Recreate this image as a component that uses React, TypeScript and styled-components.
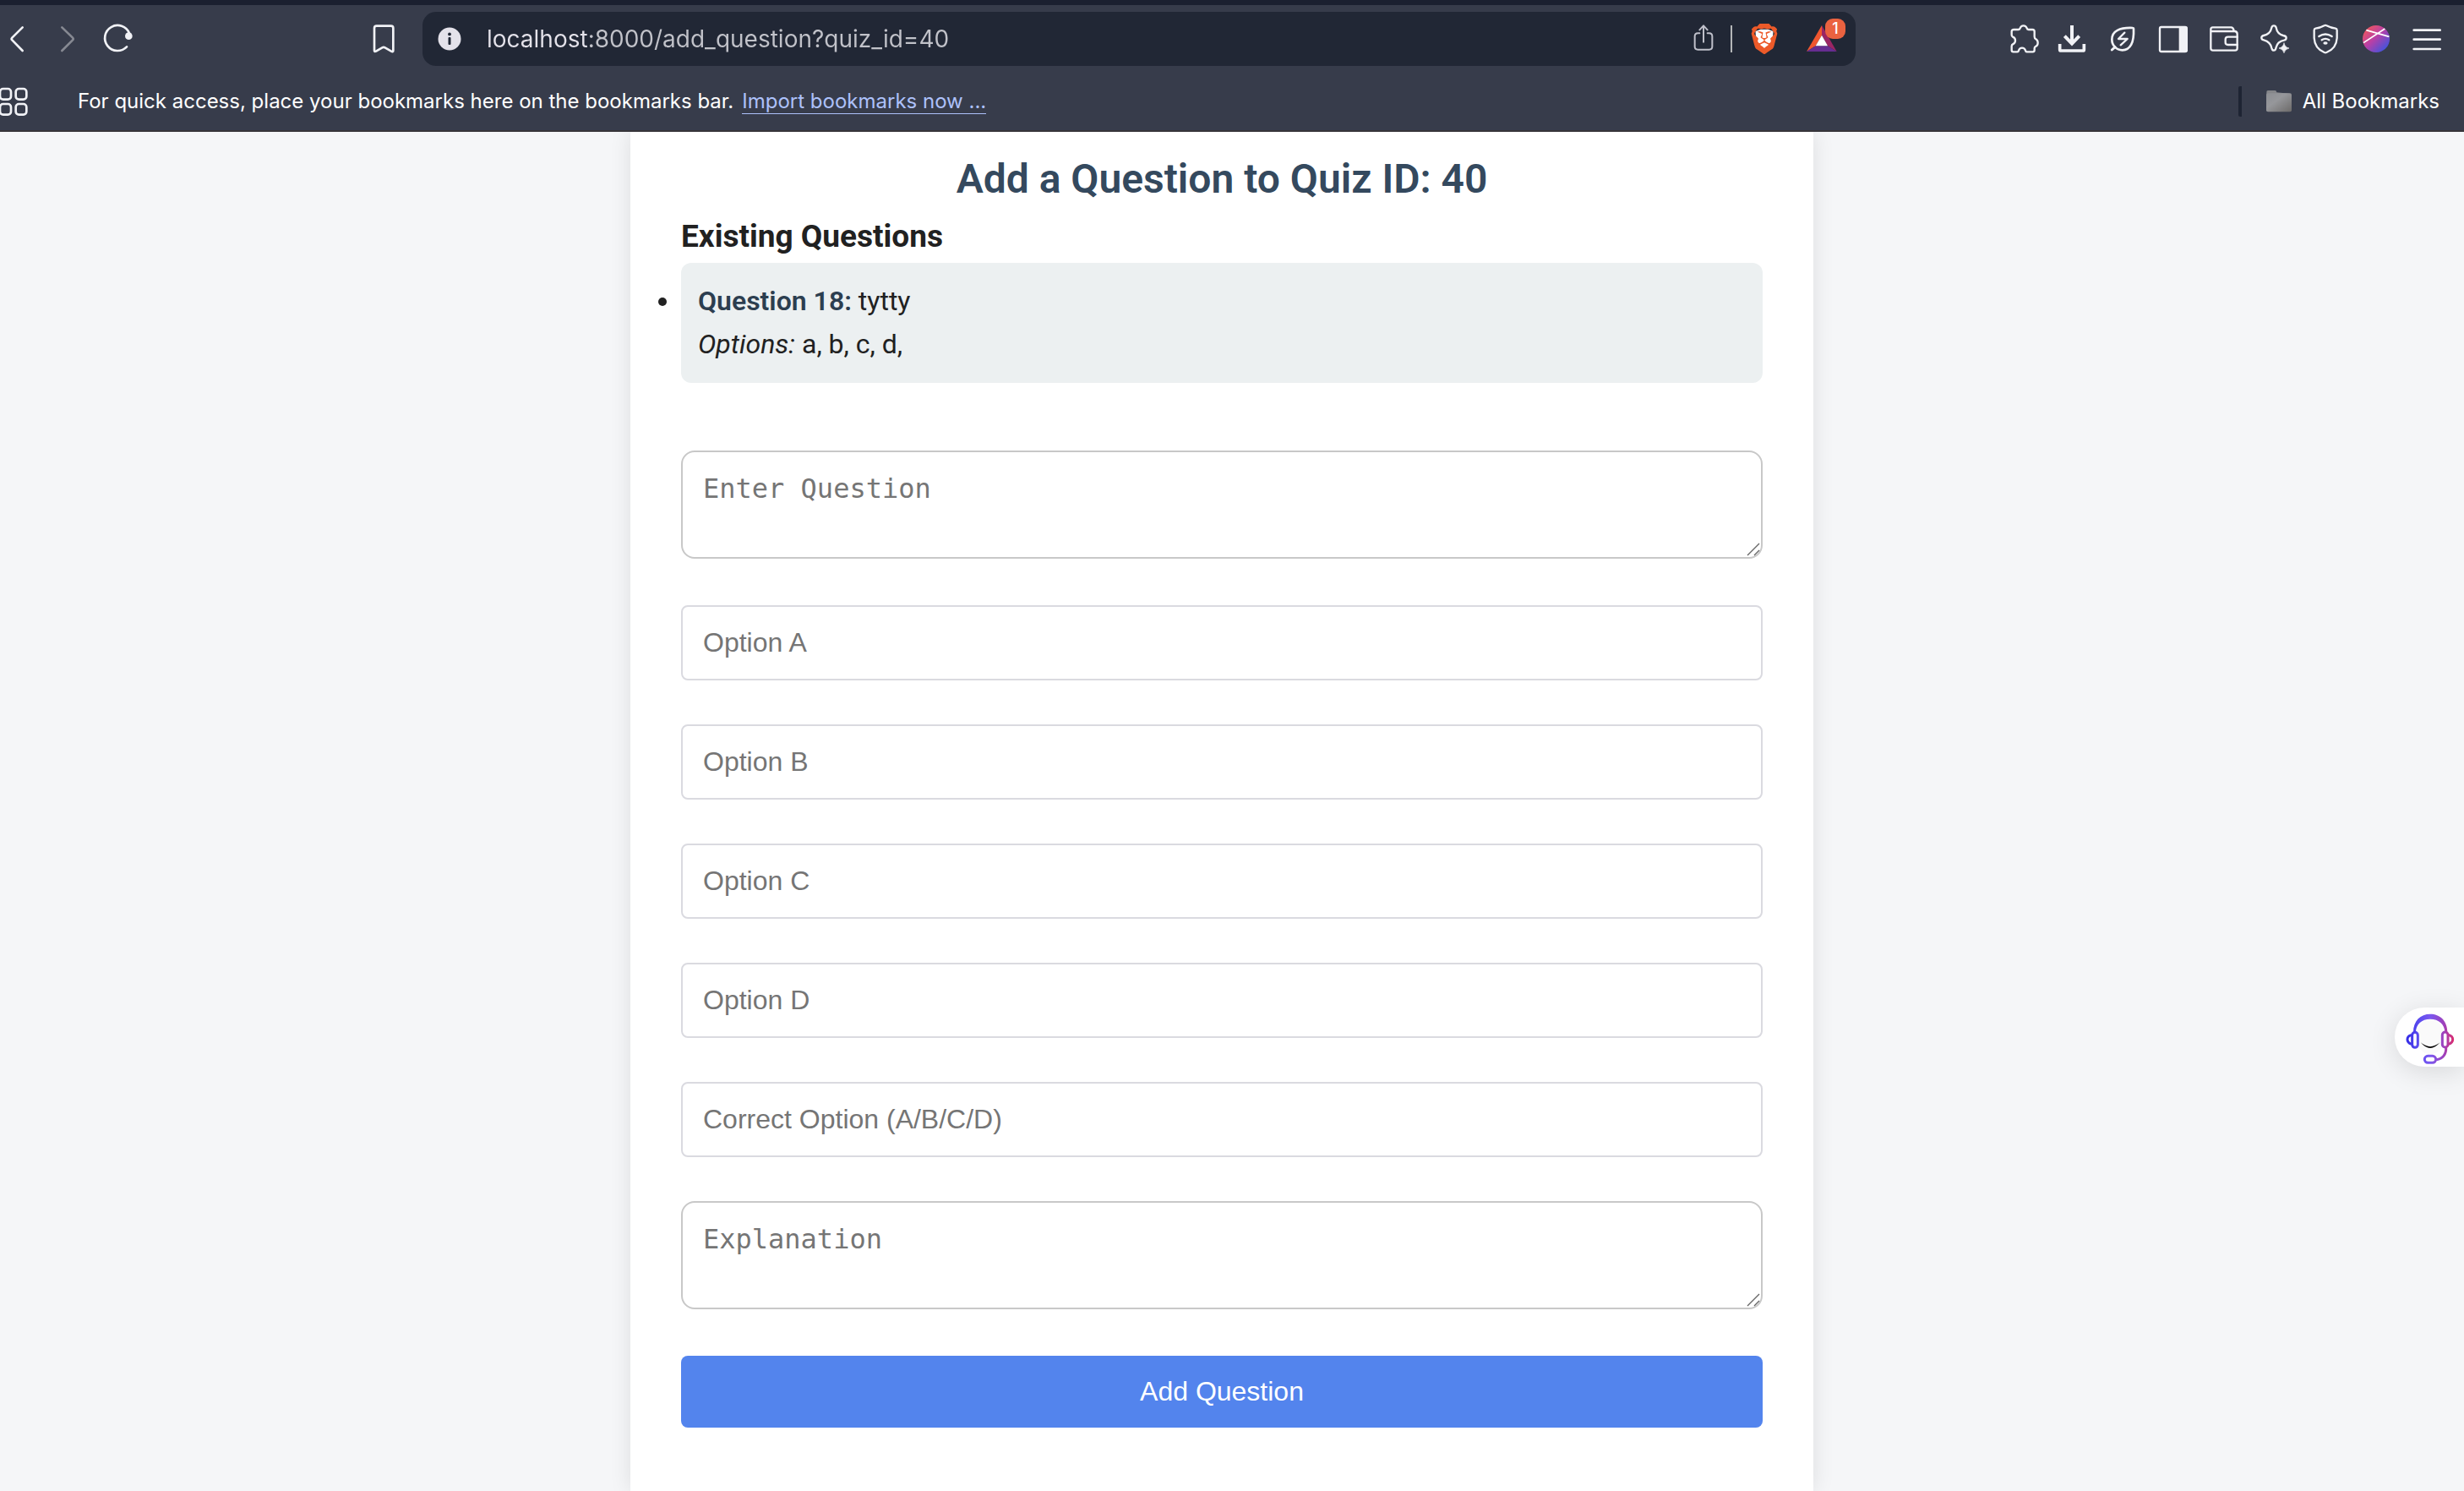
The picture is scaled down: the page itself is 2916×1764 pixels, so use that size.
import React from "react";
import styled, { createGlobalStyle } from "styled-components";
import { SiBrave } from "react-icons/si";

const uiFont = `Inter, "Noto Sans", sans-serif`;
const bodyFont = `Roboto, "Noto Sans", sans-serif`;
const fieldFont = `"Liberation Sans", Arial, sans-serif`;

const GlobalStyle = createGlobalStyle`
  *, *::before, *::after { box-sizing: border-box; }
  body { margin: 0; background: #f5f6f8; font-family: ${bodyFont}; }
`;

const Shell = styled.div`
  display: flex;
  flex-direction: column;
  min-height: 100vh;
`;

/* ---------- browser chrome ---------- */

const Chrome = styled.header`
  position: relative;
  z-index: 1;
  background: #373c4b;
  border-top: 6px solid #1b2030;
  border-bottom: 2px solid #37353a;
  font-family: ${uiFont};
`;

const Toolbar = styled.div`
  display: flex;
  align-items: center;
  height: 80px;
  padding: 0 26px 0 2px;
`;

const IconGroup = styled.div`
  display: flex;
  align-items: center;
  gap: 24px;
`;

const IconButton = styled.button<{ $dim?: boolean }>`
  display: flex;
  flex: none;
  position: relative;
  width: 36px;
  height: 36px;
  padding: 0;
  border: 0;
  background: none;
  color: ${(p) => (p.$dim ? "#868992" : "#f1f2f6")};
`;

const Glyph = styled.svg`
  display: block;
  flex: none;
  width: 36px;
  height: 36px;
  fill: none;
  stroke: currentColor;
  stroke-width: 8;
  stroke-linecap: round;
  stroke-linejoin: round;
  overflow: visible;
`;

const ClippedGlyph = styled(Glyph)`
  overflow: hidden;
`;

const AddressArea = styled.div`
  display: flex;
  flex: 1;
  align-items: center;
  gap: 28px;
  margin: 0 178px 0 278px;
`;

const AddressBar = styled.div`
  display: flex;
  flex: 1;
  align-items: center;
  height: 64px;
  padding: 0 22px 0 14px;
  border-radius: 16px;
  background: #212735;
`;

const AddressInput = styled.input`
  flex: 1;
  min-width: 0;
  margin: 0 26px;
  padding: 0;
  border: 0;
  outline: 0;
  font: 400 28px/40px ${uiFont};
  color: #c1c2c9;
  background: linear-gradient(90deg, #e4e2ea 120px, #c1c2c9 120px);
  background-clip: text;
  -webkit-background-clip: text;
  -webkit-text-fill-color: transparent;
`;

const AddressActions = styled.div`
  display: flex;
  align-items: center;
  color: #bfc0ca;
`;

const ShareButton = styled(IconButton)`
  color: #bfc0ca;
`;

const Divider = styled.span`
  width: 2px;
  height: 32px;
  margin: 0 20px 0 14px;
  background: #b4b6b8;
`;

const RewardsButton = styled(IconButton)`
  margin-left: 32px;
`;

const Badge = styled.span`
  position: absolute;
  top: -6px;
  left: 22px;
  width: 24px;
  height: 24px;
  border-radius: 9px;
  background: #ea6240;
  color: #fff;
  font: 500 18px/24px ${uiFont};
  text-align: center;
`;

const BookmarkBar = styled.nav`
  display: flex;
  align-items: center;
  height: 68px;
  padding-right: 29px;
  color: #fff;
  font-size: 24px;
  font-weight: 400;
  line-height: 32px;
`;

const BookmarkHint = styled.p`
  margin: 0 0 0 56px;
`;

const ImportLink = styled.a`
  margin-left: 10px;
  color: #adc1fa;
  text-decoration: none;
  border-bottom: 1px solid #adc1fa;
  line-height: 28px;
`;

const AllBookmarks = styled.button`
  display: flex;
  align-items: center;
  gap: 10px;
  margin-left: auto;
  padding: 0 0 0 26px;
  border: 0;
  border-left: 4px solid #1e2433;
  border-radius: 2px;
  background: none;
  color: inherit;
  font: inherit;
`;

/* ---------- quiz page ---------- */

const Page = styled.main`
  display: flex;
  flex: 1;
  justify-content: center;
  padding-right: 24px;
`;

const Card = styled.section`
  width: 100%;
  max-width: 1400px;
  padding: 26px 60px 60px;
  background: #fff;
  box-shadow: 0 0 24px rgba(0, 0, 0, 0.1);
  color: #212121;
`;

const Title = styled.h1`
  margin: 0 0 15px;
  color: #34495e;
  font-size: 48px;
  font-weight: 600;
  line-height: 60px;
  text-align: center;
`;

const Subtitle = styled.h2`
  margin: 0 0 8px;
  font-size: 37px;
  font-weight: 700;
  line-height: 46px;
`;

const QuestionList = styled.ul`
  margin: 0 0 80px;
  padding: 0;
`;

const QuestionItem = styled.li`
  padding: 20px;
  border-radius: 12px;
  background: #ecf0f1;
  font-size: 32px;
  line-height: 51px;
`;

const QuestionName = styled.strong`
  color: #2c3e50;
  font-weight: 600;
`;

const Form = styled.form`
  display: flex;
  flex-direction: column;
`;

const TextField = styled.input`
  width: 100%;
  height: 89px;
  margin-bottom: 52px;
  padding: 0 24px;
  border: 2px solid #dadae0;
  border-radius: 8px;
  background: #fff;
  font: 400 32px/38px ${fieldFont};
  &::placeholder { color: #757575; opacity: 1; }
`;

const AreaWrap = styled.div`
  display: flex;
  position: relative;
  margin-bottom: 55px;
`;

const Area = styled.textarea`
  width: 100%;
  padding: 24px;
  border: 2px solid #c8c8c8;
  border-radius: 16px;
  background: #fff;
  font: 400 32px/38px "DejaVu Sans Mono", Menlo, monospace;
  resize: none;
  overflow: hidden;
  &::placeholder { color: #757575; opacity: 1; }
`;

const Grip = styled.svg`
  position: absolute;
  right: 3px;
  bottom: 3px;
  width: 16px;
  height: 16px;
  stroke: #666;
  stroke-width: 4;
`;

const SubmitButton = styled.button`
  height: 85px;
  padding: 0 24px 2px;
  border: 0;
  border-radius: 8px;
  background: #5384ed;
  color: #fff;
  font: 400 32px/38px ${fieldFont};
`;

const SupportButton = styled.button`
  position: fixed;
  top: 1192px;
  right: 0;
  width: 82px;
  height: 70px;
  padding: 0;
  border: 0;
  border-radius: 35px 0 0 35px;
  background: #fff;
  box-shadow: 0 6px 32px rgba(0, 0, 0, 0.12);
`;

const SupportArt = styled.svg`
  display: block;
  width: 82px;
  height: 70px;
  fill: none;
`;

/* ---------- icons ---------- */

const BackIcon = () => (
  <Glyph viewBox="6 84 108 108" strokeWidth={8}>
    <path d="M80 97 L43 134 Q39 138 43 142 L80 180" />
  </Glyph>
);
const ForwardIcon = () => (
  <Glyph viewBox="186 84 108 108">
    <path d="M220 97 L258 134 Q262 138 258 142 L220 180" />
  </Glyph>
);
const ReloadIcon = () => (
  <Glyph viewBox="366 84 108 108">
    <path d="M459 118 A45 45 0 1 0 450 166" />
    <circle cx="457" cy="128" r="13" fill="currentColor" stroke="none" />
  </Glyph>
);
const BookmarkIcon = () => (
  <Glyph viewBox="1308 84 108 108">
    <path d="M1329 100 q0 -8 8 -8 h51 q8 0 8 8 v79 q0 7 -7 3 l-22 -13 q-5 -3 -10 0 l-22 13 q-6 3 -6 -3 Z" />
  </Glyph>
);
const InfoIcon = () => (
  <Glyph viewBox="0 0 36 36" strokeWidth={3}>
    <circle cx="18" cy="18" r="13.5" fill="#e4e2ea" stroke="none" />
    <circle cx="18" cy="12.4" r="1.9" fill="#212735" stroke="none" />
    <rect x="16.5" y="16" width="3" height="9" rx="1" fill="#212735" stroke="none" />
  </Glyph>
);
const ShareIcon = () => (
  <Glyph viewBox="114 84 108 108">
    <path d="M154 118 h-6 q-11 0 -11 11 v36 q0 11 11 11 h40 q11 0 11 -11 v-36 q0 -11 -11 -11 h-6" strokeWidth="6" />
    <path d="M168 149 V92 M154 106 L168 91 L182 106" strokeWidth="6" />
  </Glyph>
);
const BraveIcon = () => (
  <Glyph viewBox="0 0 24 24">
    <path d="M5 6 L9 4.5 H15 L19 6 L18.5 14 L15 17.5 L12 19.8 L9 17.5 L5.5 14 Z" fill="#fff" stroke="none" />
    <g stroke="none">
      <SiBrave width={24} height={24} size={24} color="#ec5a29" />
    </g>
  </Glyph>
);
const RewardsIcon = () => (
  <Glyph viewBox="534 84 108 108">
    <g stroke="none">
      <path d="M588 90 L534 183 L566 163 L588 125 Z" fill="#f0562f" />
      <path d="M588 90 L641 183 L609 163 L588 125 Z" fill="#9b2563" />
      <path d="M534 183 L641 183 L609 163 H566 Z" fill="#662d91" />
      <path d="M588 125 L609 163 H566 Z" fill="#fff" />
    </g>
  </Glyph>
);
const PuzzleIcon = () => (
  <Glyph viewBox="42 84 108 108">
    <path
      strokeWidth="7"
      d="M70 105 H86 Q91 105 92 100 Q95 91 104 91 Q113 91 116 100 Q117 105 122 105 H136 Q143 105 143 112 V130 Q143 136 147 138 Q155 142 155 152 Q155 161 147 165 Q143 167 143 172 V178 Q143 184 137 184 H116 Q112 184 111 179 Q108 170 99 170 Q90 170 87 179 Q86 184 82 184 H68 Q62 184 62 178 V164 Q62 159 66 157 Q75 153 75 144 Q75 134 66 131 Q62 129 62 124 V112 Q62 105 70 105 Z"
    />
  </Glyph>
);
const DownloadIcon = () => (
  <Glyph viewBox="222 84 108 108">
    <path d="M276 90 V153 M250 128 L276 155 L302 128" strokeWidth="12" strokeLinecap="butt" strokeLinejoin="miter" />
    <path d="M233 156 V176 Q233 180 238 180 H314 Q319 180 319 176 V156" strokeWidth="11" strokeLinecap="butt" />
  </Glyph>
);
const LeafIcon = () => (
  <Glyph viewBox="402 84 108 108">
    <path d="M492 99 Q495 99 495 103 C497 150 484 178 455 178 C434 178 418 161 418 140 C418 110 445 97 492 99 Z" />
    <path d="M429 167 L418 177" strokeWidth="9" />
    <path d="M463 116 L441 138 H473 L449 160" strokeWidth="7" />
  </Glyph>
);
const PanelIcon = () => (
  <Glyph viewBox="582 84 108 108">
    <rect x="588" y="96" width="95" height="87" rx="5" strokeWidth="7" />
    <path d="M656 94 H680 Q687 94 687 101 V178 Q687 186 680 186 H656 Z" fill="currentColor" stroke="none" />
  </Glyph>
);
const WalletIcon = () => (
  <Glyph viewBox="762 84 108 108">
    <path strokeWidth="7" d="M769 111 H855 Q863 113 863 121 V171 Q863 179 855 179 H777 Q769 179 769 171 V104 Q769 97 776 97 H841 Q849 97 851 109" />
    <path strokeWidth="7" d="M863 131 H830 Q821 131 821 140 V151 Q821 159 830 159 H863" />
  </Glyph>
);
const SparkleIcon = () => (
  <Glyph viewBox="132 84 108 108">
    <path
      strokeWidth="7"
      d="M175 98 Q177 91 183 91 Q189 91 191 98 Q195 121 216 126 Q227 128 227 134 Q227 141 219 143 Q196 147 191 168 Q189 179 183 179 Q177 179 175 170 Q171 149 147 142 Q139 140 139 134 Q139 128 147 126 Q170 121 175 98 Z"
    />
    <path d="M219 153 Q222 168 237 171 Q222 174 219 188 Q216 174 201 171 Q216 168 219 153 Z" fill="currentColor" strokeWidth="2" />
  </Glyph>
);
const ShieldIcon = () => (
  <Glyph viewBox="312 84 108 108">
    <path strokeWidth="7" d="M362 91 Q366 88 370 91 Q385 99 402 101 Q407 102 407 107 V135 Q405 172 370 186 Q366 188 362 186 Q328 172 326 135 V107 Q326 102 331 101 Q348 99 362 91 Z" />
    <path d="M343 129 Q366 114 389 129 M353 142 Q366 133 379 142" strokeWidth="7" />
    <ellipse cx="366" cy="153" rx="8" ry="5" fill="currentColor" stroke="none" />
  </Glyph>
);
const ProfileIcon = () => (
  <Glyph viewBox="492 84 108 108">
    <defs>
      <linearGradient id="profileFill" x1="0.1" y1="0.1" x2="0.9" y2="0.9">
        <stop offset="0" stopColor="#f0585c" />
        <stop offset="0.45" stopColor="#b93fa6" />
        <stop offset="1" stopColor="#3b55e0" />
      </linearGradient>
    </defs>
    <circle cx="546" cy="138" r="48" fill="url(#profileFill)" stroke="none" />
    <path d="M511 107 L592 130 M501 152 L577 102" strokeWidth="5" strokeLinecap="butt" stroke="#fff" />
  </Glyph>
);
const MenuIcon = () => (
  <Glyph viewBox="672 84 108 108">
    <path d="M680 107 H773 M680 140 H773 M680 174 H773" />
  </Glyph>
);
const AppsIcon = () => (
  <ClippedGlyph viewBox="0 306 108 108">
    <rect x="0" y="315" width="39" height="38" rx="11" />
    <rect x="56" y="315" width="38" height="38" rx="11" />
    <rect x="0" y="369" width="39" height="38" rx="11" />
    <rect x="56" y="369" width="38" height="38" rx="11" />
  </ClippedGlyph>
);
const FolderIcon = () => (
  <Glyph viewBox="150 306 108 108">
    <defs>
      <linearGradient id="folderFill" x1="0" y1="0" x2="1" y2="1">
        <stop offset="0" stopColor="#8c8e93" />
        <stop offset="0.4" stopColor="#96979b" />
        <stop offset="1" stopColor="#6c6a69" />
      </linearGradient>
    </defs>
    <path d="M160 340 V326 Q160 321 165 321 H190 Q195 321 196 328 L240 332 V345 Z" fill="#85868a" stroke="none" />
    <rect x="159" y="331" width="90" height="66" rx="6" fill="url(#folderFill)" stroke="none" />
  </Glyph>
);

const HeadsetArt = () => (
  <SupportArt viewBox="102 96 246 210">
    <defs>
      <linearGradient id="headset" gradientUnits="userSpaceOnUse" x1="142" y1="0" x2="314" y2="0">
        <stop offset="0" stopColor="#3029e6" />
        <stop offset="0.25" stopColor="#5a4bee" />
        <stop offset="0.5" stopColor="#7a58f0" />
        <stop offset="0.8" stopColor="#a040b8" />
        <stop offset="1" stopColor="#e02a68" />
      </linearGradient>
    </defs>
    <ellipse cx="228" cy="200" rx="50" ry="62" fill="#fafafa" />
    <path d="M168 184 C168 142 194 119 228 119 C262 119 289 142 289 184 L280 184 C280 155 258 137 228 137 C198 137 177 155 177 184 Z" fill="url(#headset)" />
    <g stroke="url(#headset)" strokeWidth="9">
      <rect x="164" y="184" width="20" height="54" rx="10" fill="#fff" />
      <rect x="271" y="183" width="20" height="54" rx="10" fill="#fff" />
      <path d="M162 193 Q147 197 147 209 Q147 221 162 226" />
      <path d="M293 193 Q308 197 308 209 Q308 221 293 226" />
      <path d="M284 236 C286 262 272 279 250 281" />
      <rect x="208" y="268" width="40" height="24" rx="12" fill="#fff" />
    </g>
    <path d="M194 220 Q228 249 263 220 Q228 260 194 220 Z" fill="#000" />
  </SupportArt>
);

const toolbarIcons: [string, React.FC][] = [
  ["Extensions", PuzzleIcon],
  ["Downloads", DownloadIcon],
  ["Energy saver", LeafIcon],
  ["Sidebar", PanelIcon],
  ["Wallet", WalletIcon],
  ["Leo AI", SparkleIcon],
  ["VPN", ShieldIcon],
  ["Profile", ProfileIcon],
  ["Menu", MenuIcon],
];

const optionFields = [
  { name: "option_a", label: "Option A" },
  { name: "option_b", label: "Option B" },
  { name: "option_c", label: "Option C" },
  { name: "option_d", label: "Option D" },
  { name: "correct_option", label: "Correct Option (A/B/C/D)" },
];

function LongField({ name, label }: { name: string; label: string }) {
  return (
    <AreaWrap>
      <Area name={name} rows={2} placeholder={label} aria-label={label} />
      <Grip viewBox="501 396 48 48" aria-hidden="true">
        <path d="M504 441 L546 399 M528 441 L546 423" />
      </Grip>
    </AreaWrap>
  );
}

export default function App() {
  return (
    <Shell>
      <GlobalStyle />
      <Chrome>
        <Toolbar>
          <IconGroup>
            <IconButton aria-label="Back"><BackIcon /></IconButton>
            <IconButton aria-label="Forward" $dim><ForwardIcon /></IconButton>
            <IconButton aria-label="Reload"><ReloadIcon /></IconButton>
          </IconGroup>
          <AddressArea>
            <IconButton aria-label="Bookmark this page"><BookmarkIcon /></IconButton>
            <AddressBar>
              <IconButton aria-label="Site information"><InfoIcon /></IconButton>
              <AddressInput
                type="text"
                aria-label="Address"
                defaultValue="localhost:8000/add_question?quiz_id=40"
              />
              <AddressActions>
                <ShareButton aria-label="Share"><ShareIcon /></ShareButton>
                <Divider />
                <IconButton aria-label="Brave Shields"><BraveIcon /></IconButton>
                <RewardsButton aria-label="Brave Rewards">
                  <RewardsIcon />
                  <Badge>1</Badge>
                </RewardsButton>
              </AddressActions>
            </AddressBar>
          </AddressArea>
          <IconGroup>
            {toolbarIcons.map(([label, Icon]) => (
              <IconButton key={label} aria-label={label}><Icon /></IconButton>
            ))}
          </IconGroup>
        </Toolbar>
        <BookmarkBar>
          <IconButton aria-label="Apps"><AppsIcon /></IconButton>
          <BookmarkHint>
            For quick access, place your bookmarks here on the bookmarks bar.
            <ImportLink href="#import">Import bookmarks now ...</ImportLink>
          </BookmarkHint>
          <AllBookmarks>
            <FolderIcon />
            All Bookmarks
          </AllBookmarks>
        </BookmarkBar>
      </Chrome>

      <Page>
        <Card>
          <Title>Add a Question to Quiz ID: 40</Title>
          <Subtitle>Existing Questions</Subtitle>
          <QuestionList>
            <QuestionItem>
              <QuestionName>Question 18:</QuestionName> tytty
              <br />
              <em>Options:</em> a, b, c, d,
            </QuestionItem>
          </QuestionList>
          <Form onSubmit={(e) => e.preventDefault()}>
            <LongField name="question" label="Enter Question" />
            {optionFields.map((f) => (
              <TextField key={f.name} type="text" name={f.name} placeholder={f.label} aria-label={f.label} />
            ))}
            <LongField name="explanation" label="Explanation" />
            <SubmitButton type="submit">Add Question</SubmitButton>
          </Form>
        </Card>
      </Page>

      <SupportButton aria-label="Open support chat"><HeadsetArt /></SupportButton>
    </Shell>
  );
}
